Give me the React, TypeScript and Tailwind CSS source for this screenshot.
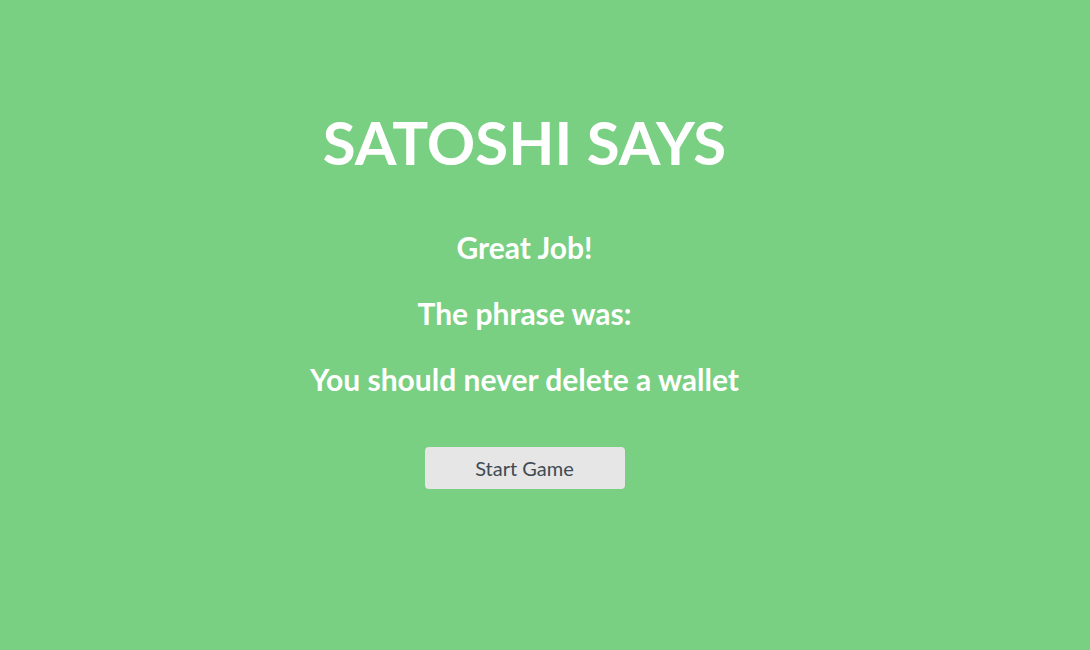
export default function App() {
  return (
    <main className="min-h-[650px] w-full bg-[#79cf82] font-['Lato','Liberation_Sans',sans-serif] text-white">
      <div className="flex w-[1049px] flex-col items-center pt-[106px]">
        <h1 className="text-[60px] font-bold leading-[72px]">SATOSHI SAYS</h1>
        <div className="mt-[51px] flex flex-col items-center gap-[30px] text-[30px] font-bold leading-[36px]">
          <p>Great Job!</p>
          <p>The phrase was:</p>
          <p>You should never delete a wallet</p>
        </div>
        <button className="mt-[50px] h-[42px] w-[200px] rounded-[4px] bg-[#e6e6e6] text-[20px] text-[#404b53]">
          Start Game
        </button>
      </div>
    </main>
  );
}
